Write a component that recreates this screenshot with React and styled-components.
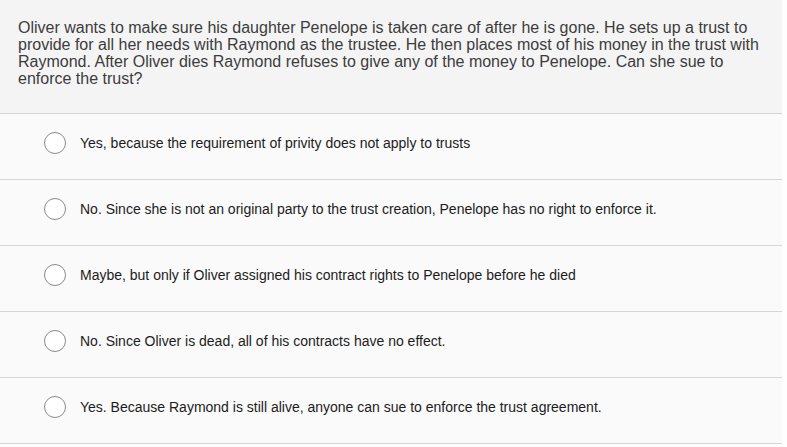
import React from 'react'
import styled, { createGlobalStyle } from 'styled-components'

const GlobalStyle = createGlobalStyle`
   html, body{
      margin: 0;
      padding: 0;
      background: #fefefe;
   }
   body{
      font-family: "Liberation Sans", Arial, Helvetica, sans-serif;
   }
`

const options = [
   'Yes, because the requirement of privity does not apply to trusts',
   'No. Since she is not an original party to the trust creation, Penelope has no right to enforce it.',
   'Maybe, but only if Oliver assigned his contract rights to Penelope before he died',
   'No. Since Oliver is dead, all of his contracts have no effect.',
   'Yes. Because Raymond is still alive, anyone can sue to enforce the trust agreement.',
]

const App = () => {
   return (
      <>
         <GlobalStyle />
         <QuizStyled>
            <Question>
               Oliver wants to make sure his daughter Penelope is taken care of after he is gone. He sets up a trust to provide for all her needs with Raymond as the trustee. He then places most of his money in the trust with Raymond. After Oliver dies Raymond refuses to give any of the money to Penelope. Can she sue to enforce the trust?
            </Question>
            {options.map((text, i) => (
               <Option key={i}>
                  <Radio />
                  <span>{text}</span>
               </Option>
            ))}
         </QuizStyled>
      </>
   )
}

const QuizStyled = styled.div`
   width: 782px;
   background: #fafafa;
`

const Question = styled.div`
   background: #f4f4f4;
   color: #3c3c3c;
   font-size: 16px;
   line-height: 17px;
   padding: 19px 16px 26px 18px;
   border-bottom: 1px solid #d6d6d6;
`

const Option = styled.label`
   display: flex;
   align-items: center;
   gap: 14px;
   height: 66px;
   padding: 0 0 7px 44px;
   box-sizing: border-box;
   border-bottom: 1px solid #d6d6d6;
   font-size: 14px;
   color: #1c1c1c;
`

const Radio = styled.span`
   display: block;
   width: 20px;
   height: 20px;
   border: 1px solid #8a8a8a;
   border-radius: 50%;
   background: #fff;
   flex-shrink: 0;
`

export default App
